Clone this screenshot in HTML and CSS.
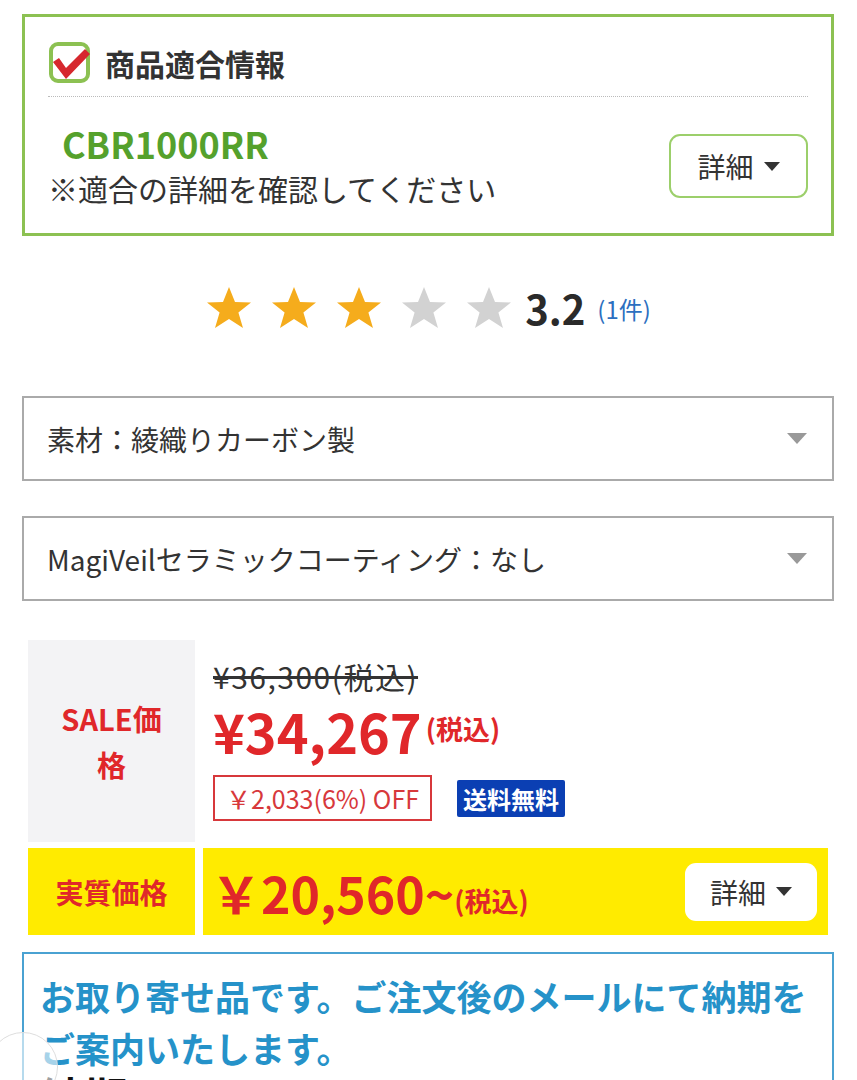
FILE: index.html
```html
<!DOCTYPE html>
<html lang="ja">

<head>
  <meta charset="UTF-8" />
  <meta name="viewport" content="width=device-width, initial-scale=1.0" />
  <title>商品詳細</title>
  <link rel="stylesheet" href="styles.css">
</head>

<body>

  <div class="fit-box">
    <div class="fit-head">
      <svg class="fit-check" width="44" height="44" viewBox="0 0 44 44">
        <rect x="3" y="3" width="37" height="37" rx="7" fill="#fff" stroke="#8cc152" stroke-width="4" />
        <polygon points="5,21 11,17 18,27 37,8 42,13 18,38" fill="#d6282e" />
      </svg>
      <h2>商品適合情報</h2>
    </div>
    <div class="fit-body">
      <div class="fit-text">
        <div class="fit-model">CBR1000RR</div>
        <div class="fit-note">※適合の詳細を確認してください</div>
      </div>
      <button class="detail-btn green">詳細 <span class="caret"></span></button>
    </div>
  </div>

  <div class="rating">
    <div class="stars">
      <svg class="star on" viewBox="0 0 24 24"><polygon points="12,1.5 15,9 23,9.2 16.7,14.2 19,22 12,17.5 5,22 7.3,14.2 1,9.2 9,9" /></svg>
      <svg class="star on" viewBox="0 0 24 24"><polygon points="12,1.5 15,9 23,9.2 16.7,14.2 19,22 12,17.5 5,22 7.3,14.2 1,9.2 9,9" /></svg>
      <svg class="star on" viewBox="0 0 24 24"><polygon points="12,1.5 15,9 23,9.2 16.7,14.2 19,22 12,17.5 5,22 7.3,14.2 1,9.2 9,9" /></svg>
      <svg class="star" viewBox="0 0 24 24"><polygon points="12,1.5 15,9 23,9.2 16.7,14.2 19,22 12,17.5 5,22 7.3,14.2 1,9.2 9,9" /></svg>
      <svg class="star" viewBox="0 0 24 24"><polygon points="12,1.5 15,9 23,9.2 16.7,14.2 19,22 12,17.5 5,22 7.3,14.2 1,9.2 9,9" /></svg>
    </div>
    <span class="score">3.2</span>
    <a class="count">(1件)</a>
  </div>

  <div class="select">
    <span>素材：綾織りカーボン製</span>
    <span class="select-arrow"></span>
  </div>

  <div class="select">
    <span>MagiVeilセラミックコーティング：なし</span>
    <span class="select-arrow"></span>
  </div>

  <div class="price-grid">
    <div class="label sale">SALE価格</div>
    <div class="sale-info">
      <div class="list-price">¥36,300(税込)</div>
      <div class="sale-price">¥34,267<small>(税込)</small></div>
      <div class="off-row">
        <span class="off">￥2,033(6%) OFF</span>
        <span class="free-ship">送料無料</span>
      </div>
    </div>
    <div class="label real">実質価格</div>
    <div class="real-info">
      <div class="real-price">￥20,560~<small>(税込)</small></div>
      <button class="detail-btn white">詳細 <span class="caret"></span></button>
    </div>
  </div>

  <div class="notice">
    <p class="notice-main">お取り寄せ品です。ご注文後のメールにて納期をご案内いたします。</p>
    <p class="notice-sub">納期について</p>
  </div>

  <div class="to-top"></div>

</body>

</html>
```

FILE: styles.css
```css
body {
  margin: 0;
  padding: 14px 23px 0 22px;
  font-family: 'Noto Sans CJK JP', 'Noto Sans', sans-serif;
  background: #fff;
  color: #333;
  height: 1080px;
  overflow: hidden;
  box-sizing: border-box;
}

.fit-box {
  border: 3px solid #8cc152;
  padding: 24px 23px 22px 23px;
}

.fit-head {
  display: flex;
  align-items: center;
  gap: 13px;
  padding-bottom: 11px;
  border-bottom: 1px dotted #bbb;
}

.fit-head h2 {
  margin: 0;
  font-size: 30px;
  font-weight: bold;
  line-height: 44px;
}

.fit-body {
  display: flex;
  align-items: center;
  justify-content: space-between;
  margin-top: 24px;
}

.fit-model {
  padding-left: 14px;
  font-size: 36px;
  font-weight: bold;
  color: #55a12c;
  line-height: 44px;
}

.fit-note {
  font-size: 30px;
  line-height: 46px;
}

.detail-btn {
  display: flex;
  align-items: center;
  justify-content: center;
  gap: 10px;
  font-family: inherit;
  font-size: 28px;
  color: #333;
  background: #fff;
  border-radius: 11px;
  cursor: pointer;
}

.detail-btn.green {
  width: 139px;
  height: 64px;
  border: 2px solid #9ccf6b;
}

.detail-btn.white {
  width: 132px;
  height: 58px;
  border: none;
  margin-right: 11px;
}

.caret {
  width: 0;
  height: 0;
  border-left: 8px solid transparent;
  border-right: 8px solid transparent;
  border-top: 9px solid #333;
}

.rating {
  display: flex;
  align-items: center;
  justify-content: center;
  height: 60px;
  margin: 42px 0 58px;
}

.stars {
  display: flex;
  gap: 17px;
}

.star {
  width: 48px;
  height: 48px;
  fill: #d2d2d2;
}

.star.on {
  fill: #f5ac1c;
}

.score {
  margin-left: 12px;
  font-size: 40px;
  font-weight: bold;
  color: #2a2a2a;
}

.count {
  margin-left: 12px;
  font-size: 24px;
  color: #2c6fc0;
}

.select {
  display: flex;
  align-items: center;
  justify-content: space-between;
  height: 81px;
  padding: 0 25px 0 23px;
  border: 2px solid #aaa;
  font-size: 28px;
  margin-bottom: 35px;
}

.select-arrow {
  width: 0;
  height: 0;
  border-left: 10px solid transparent;
  border-right: 10px solid transparent;
  border-top: 11px solid #999;
}

.price-grid {
  display: grid;
  grid-template-columns: 167px 1fr;
  grid-template-rows: 202px 87px;
  gap: 6px 8px;
  margin: 39px 6px 0 6px;
}

.label {
  display: flex;
  align-items: center;
  justify-content: center;
  text-align: center;
  color: #e0272a;
  font-weight: bold;
}

.label.sale {
  background: #f3f3f5;
  font-size: 29px;
  line-height: 46px;
  padding: 0 20px;
}

.label.real {
  background: #ffeb00;
  font-size: 28px;
}

.sale-info {
  padding: 14px 0 0 10px;
}

.list-price {
  font-size: 30px;
  letter-spacing: 1.5px;
  line-height: 44px;
  text-decoration: line-through;
  color: #333;
}

.sale-price {
  font-size: 54px;
  font-weight: bold;
  color: #e0272a;
  line-height: 62px;
}

.sale-price small,
.real-price small {
  font-size: 27px;
  margin-left: 4px;
  vertical-align: 14px;
}

.off-row {
  display: flex;
  align-items: center;
  gap: 25px;
  margin-top: 13px;
}

.off {
  display: inline-block;
  padding: 0 11px;
  height: 42px;
  line-height: 42px;
  border: 2px solid #d7383b;
  color: #d7383b;
  font-size: 25px;
}

.free-ship {
  display: inline-block;
  padding: 0 6px;
  height: 37px;
  line-height: 37px;
  background: #0b3fb3;
  color: #fff;
  font-size: 24px;
  font-weight: bold;
  border-radius: 2px;
}

.real-info {
  display: flex;
  align-items: center;
  justify-content: space-between;
  background: #ffeb00;
  padding-left: 8px;
}

.real-price {
  font-size: 50px;
  font-weight: bold;
  color: #e0272a;
}

.real-price small {
  margin-left: 0;
  vertical-align: 2px;
}

.notice {
  margin-top: 17px;
  border: 2px solid #4aa2d2;
  padding: 16px 16px 0 16px;
  height: 200px;
}

.notice-main {
  margin: 0;
  font-size: 35px;
  line-height: 52px;
  font-weight: bold;
  color: #2592c9;
}

.notice-sub {
  margin: 0;
  font-size: 44px;
  line-height: 44px;
  font-weight: bold;
  color: #111;
}

.to-top {
  position: fixed;
  left: -12px;
  bottom: -22px;
  width: 68px;
  height: 68px;
  border-radius: 50%;
  border: 1px solid #ddd;
  background: rgba(255, 255, 255, 0.6);
}
```
